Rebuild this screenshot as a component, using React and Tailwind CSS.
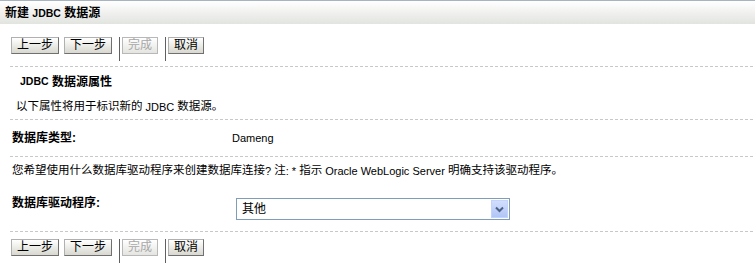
import React from 'react';

const Btn = ({ label, disabled }) => (
    <button
        disabled={disabled}
        className={
            'h-[17px] px-[5px] text-[12px] leading-[15px] border bg-gradient-to-b from-[#ffffff] to-[#d8d8d0] ' +
            (disabled
                ? 'text-[#a8a8a8] border-[#b8b8b8] from-[#f8f8f8] to-[#e4e4e0]'
                : 'text-black border-t-[#b0b0b0] border-l-[#b0b0b0] border-b-[#707070] border-r-[#707070]')
        }
    >
        {label}
    </button>
);

const Sep = () => <div className='w-px h-[24px] bg-[#606060] self-start'></div>;

const ButtonRow = () => (
    <div className='flex items-start pl-[11px]'>
        <Btn label='上一步' />
        <div className='w-[5px]'></div>
        <Btn label='下一步' />
        <div className='w-[7px]'></div>
        <Sep />
        <div className='w-[2px]'></div>
        <Btn label='完成' disabled />
        <div className='w-[7px]'></div>
        <Sep />
        <div className='w-[2px]'></div>
        <Btn label='取消' />
    </div>
);

const Dash = () => <div className='ml-[10px] mr-[2px] border-t border-dashed border-[#c8c8c8]'></div>;

// latin runs render a touch smaller than the cjk glyphs
const Lat = ({ children, bold }) => <span className={bold ? 'text-[10.5px]' : 'text-[11px]'}>{children}</span>;

export default function App() {
    return (
        <div
            className='w-[755px] h-[275px] bg-white text-[11.5px] text-black overflow-hidden'
            style={{ fontFamily: '"Liberation Sans", "Noto Sans CJK SC", sans-serif' }}
        >
            {/* header */}
            <div className='h-[24px] border-t border-[#a8b4c0] bg-gradient-to-b from-[#ffffff] to-[#e2e4e0] flex items-center pl-[5px]'>
                <span className='font-bold text-[12px]'>新建 <Lat bold>JDBC</Lat> 数据源</span>
            </div>

            <div className='pt-[13px] h-[42px]'>
                <ButtonRow />
            </div>
            <Dash />

            <div className='h-[52px] flex flex-col'>
                <div className='h-[29px] flex items-center pl-[20px] pt-[1px] font-bold text-[12px]'><Lat bold>JDBC</Lat>&nbsp;数据源属性</div>
                <div className='h-[22px] flex items-center pl-[16px] whitespace-pre'>以下属性将用于标识新的<Lat> JDBC </Lat>数据源。</div>
            </div>
            <Dash />

            <div className='h-[36px] flex items-center'>
                <div className='pl-[12px] w-[232px] font-bold text-[12px]'>数据库类型:</div>
                <Lat>Dameng</Lat>
            </div>
            <Dash />

            <div className='h-[28px] flex items-center pl-[12px] whitespace-pre'>
                您希望使用什么数据库驱动程序来创建数据库连接<Lat>? </Lat>注<Lat>: * </Lat>指示<Lat> Oracle WebLogic Server </Lat>明确支持该驱动程序。
            </div>

            <div className='h-[46px] flex items-start pt-[13px]'>
                <div className='pl-[12px] w-[236px] font-bold text-[12px] mt-[-4px]'>数据库驱动程序:</div>
                <div className='w-[274px] h-[22px] border border-[#7f9db9] flex items-center justify-between pl-[5px] pr-[1px] text-[12px]'>
                    <span>其他</span>
                    <div className='w-[17px] h-[18px] border border-[#c3d3fd] bg-gradient-to-b from-[#d2defc] to-[#b0c6f6] flex items-center justify-center'>
                        <svg width='9' height='7' viewBox='0 0 9 7'>
                            <path d='M1 1.5 L4.5 5 L8 1.5' fill='none' stroke='#4d6185' strokeWidth='2' />
                        </svg>
                    </div>
                </div>
            </div>
            <Dash />

            <div className='pt-[7px]'>
                <ButtonRow />
            </div>
        </div>
    );
}
